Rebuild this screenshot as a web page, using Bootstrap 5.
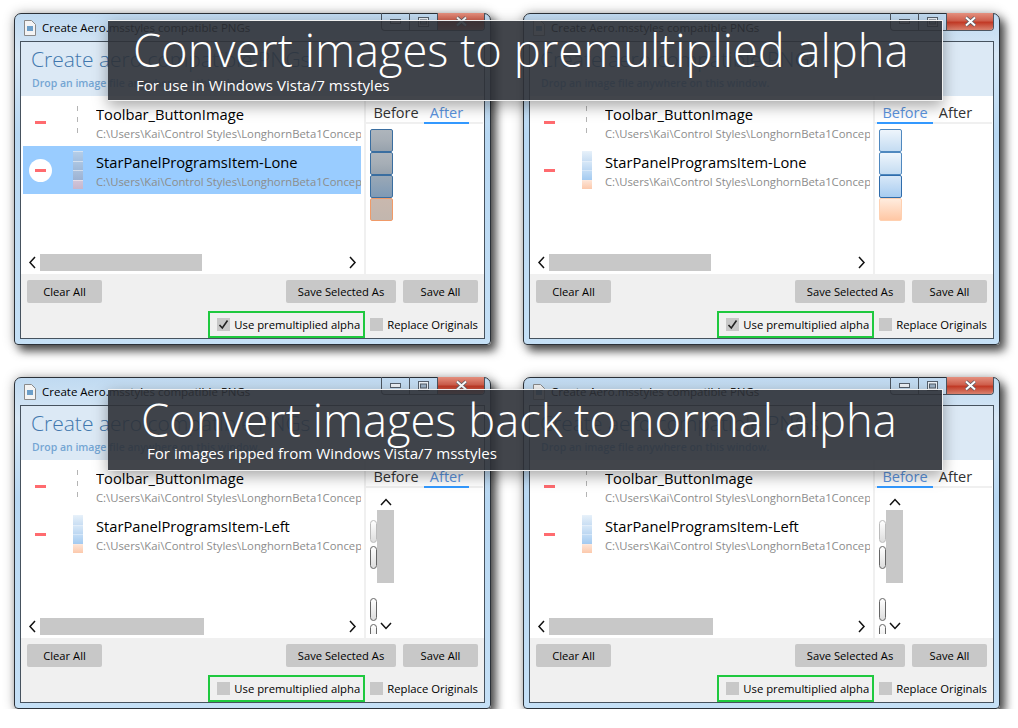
<!DOCTYPE html>
<html lang="en">
<head>
  <meta charset="UTF-8" />
  <meta name="viewport" content="width=device-width, initial-scale=1.0" />
  <title>Create Aero.msstyles compatible PNGs</title>
  <link href="https://cdn.jsdelivr.net/npm/bootstrap@5.3.0/dist/css/bootstrap.min.css" rel="stylesheet" />
  <style>
    body { background: #fff; font-family: "Open Sans", "Noto Sans", sans-serif; color: #000; overflow: hidden; }
    .shot-grid { padding: 13px 0 0 14px; gap: 32px; }
    .win-row { gap: 32px; width: 986px; }
    .banner {
      top: 7px; left: 94px; width: 835px; height: 81px; z-index: 5;
      background: rgba(45, 49, 55, .9);
      border: 1px solid #f0f0f0; border-left: 0;
      box-shadow: 0 5px 14px rgba(0, 0, 0, .35);
      color: #fff; padding-left: 25px;
    }
    .banner.tall { top: 12px; height: 82px; padding-left: 33px; }
    .banner-head { font-size: 45.3px; font-weight: 300; line-height: 52px; margin-top: 3px; }
    .banner.tall .banner-head { font-size: 45.3px; margin-top: 4px; }
    .banner-sub { font-size: 15.1px; line-height: 20px; margin: -1px 0 0 3px; }
    .banner.tall .banner-sub { margin-top: -3px; margin-left: 6px; }

    .aero-win {
      width: 477px; height: 332px;
      border: 1px solid #2b3138; border-radius: 7px 7px 4px 4px;
      background: linear-gradient(180deg, #c0daf1 0, #d7e7f5 40px, #b8d8f3 120px, #c5e0f6 100%);
      box-shadow: 5px 6px 10px rgba(0, 0, 0, .68), 0 0 12px rgba(0, 0, 0, .28);
      padding: 0 5px 5px 5px;
    }
    .win-title { height: 27px; font-size: 11.5px; padding-left: 3px; }
    .win-title span { margin-left: 5px; }
    .win-btns { top: -1px; right: 5px; height: 18px; border: 1px solid #4c5560; border-top: 0; border-radius: 0 0 4px 4px; }
    .win-btn { width: 28px; border-right: 1px solid #4c5560; }
    .win-btn.closer {
      width: 46px; border-right: 0; border-radius: 0 0 3px 0;
      background: linear-gradient(180deg, #e4907f 0, #cf5f4c 45%, #c23a26 55%, #d9826f 100%);
    }
    .client { height: 298px; border: 1px solid #46525e; background: #fff; }
    .head-pane { height: 54px; background: #dce9f5; padding: 4px 0 0 10px; }
    .head-title { font-size: 21px; font-weight: 300; line-height: 27px; color: #4177ad; }
    .head-sub { font-size: 10.5px; line-height: 16px; font-weight: 600; color: #74a5d3; margin: 2px 0 0 1px; }

    .mid-pane { height: 178px; }
    .list-pane { width: 343px; padding: 2px 3px 0 2px; }
    .file-row { height: 48px; padding-left: 6px; }
    .file-row.picked { background: #99ccff; }
    .minus-cell { width: 23px; height: 23px; border-radius: 50%; }
    .picked .minus-cell { background: #fff; }
    .minus-cell i { display: block; width: 11px; height: 3px; background: #ff6b6f; }
    .thumb-cell { width: 10px; margin: 0 13px 0 21px; }
    .thumb-cell b { display: block; height: 9.5px; border-top: 1px solid rgba(255, 255, 255, .55); }
    .dash-line { width: 1px; height: 32px; margin-left: 4px; background: repeating-linear-gradient(180deg, #b4b4b4 0 5px, #fff 5px 11px); }
    .file-info { min-width: 0; flex: 1; overflow: hidden; white-space: nowrap; padding-top: 2px; }
    .file-name { font-size: 14.7px; line-height: 19px; }
    .file-path { font-size: 11.3px; line-height: 15px; color: #8c8c8c; margin-top: 2px; }
    .hscroll { height: 17px; margin-top: 60px; padding: 0 3px 0 4px; }
    .hscroll-thumb { background: #c8c8c8; height: 17px; margin-left: 2px; }

    .side-pane { width: 120px; border-left: 2px solid #f0f0f0; }
    .tab-strip { border-bottom: 2px solid #f0f0f0; height: 28px; margin-right: 1px; padding-left: 2px; }
    .tab-item { font-size: 14.5px; line-height: 22px; padding: 6px 0 0; height: 28px; margin-bottom: -2px; text-align: center; color: #333; }
    .tab-item.first { width: 56px; }
    .tab-item.second { width: 45px; }
    .tab-item.on { color: #5b94e0; border-bottom: 2px solid #3399ff; }
    .tile-stack { padding: 5px 0 0 4px; }
    .tile { width: 23px; height: 23px; border-radius: 2px; border: 1px solid #3a6ea0; }
    .tile.dark { background: linear-gradient(180deg, #aeb5bc 0, #a6aeb6 50%, #97a2ad 100%); }
    .tile.dark.mid { background: linear-gradient(180deg, #9aa8b6, #7f9ab5); }
    .tile.dark.warm { background: linear-gradient(180deg, #c9b8ae, #c2b6ae); border-color: #f09a68; }
    .tile.lite { background: linear-gradient(180deg, #eef5fc 0, #c4dcf2 100%); border-color: #4f88bf; }
    .tile.lite.mid { background: linear-gradient(180deg, #d8e8f8, #a8ccf0); border-color: #2f6cab; }
    .tile.lite.warm { background: linear-gradient(180deg, #ffecde, #ffc7a4); border-color: #ffd0b0; }

    .vbar { height: 146px; overflow: hidden; }
    .pill-col { width: 7px; margin: 32px 0 0 4px; }
    .pill { width: 7px; height: 23px; border: 1px solid #666; border-radius: 4px; margin-bottom: 3px; background: linear-gradient(180deg, #fff, #ddd); flex-shrink: 0; }
    .pill.gap { margin-top: 26px; }
    .pill.faint { border-color: #bbb; }
    .vbar-track { width: 17px; }
    .vbar-thumb { height: 73px; background: #c8c8c8; flex-shrink: 0; }
    .chev-up { height: 22px; padding-top: 10px; flex-shrink: 0; }
    .chev-dn { margin-top: 39px; }

    .foot-pane { height: 64px; background: #f0f0f0; padding: 6px 6px 0 6px; }
    .act-btn {
      height: 23px; padding: 0; width: 75px; border: 0; border-radius: 2px;
      background: #c8c8c8; color: #000; font-size: 11.2px; line-height: 24px;
    }
    .act-btn.wide { width: 110px; margin-right: 7px; }
    .check-row { margin-top: 8px; font-size: 11.3px; line-height: 16px; }
    .green-box { width: 157px; height: 27px; border: 2px solid #1fc93f; padding-left: 7px; margin-right: 5px; }
    .tick-box { width: 13px; height: 13px; background: #c8c8c8; margin-right: 4px; flex-shrink: 0; }
  </style>
</head>
<body>
  <div class="shot-grid d-flex flex-column" id="shots"></div>

  <script>
    const chevron = (d, w, h) =>
      `<svg width="${w}" height="${h}" viewBox="0 0 ${w} ${h}" fill="none" stroke="#111" stroke-width="1.5"><path d="${d}"/></svg>`;

    const thumb = (kind) => {
      const sets = {
        bright: [["#e4eff9", "#c9def3"], ["#d6e7f7", "#bcd7f2"], ["#c2dcf5", "#a3caf0"], ["#fde3d4", "#fcc9ac"]],
        dim: [["#b4cde8", "#a4c0e0"], ["#acc5e2", "#9fb9d9"], ["#a9bfdc", "#9cb2d3"], ["#d0c4d8", "#c7b6cc"]],
      };
      return sets[kind].map((c) => `<b style="background:linear-gradient(${c[0]},${c[1]})"></b>`).join("");
    };

    const row = (name, picked, kind) => `
      <div class="file-row d-flex align-items-center ${picked ? "picked" : ""}">
        <div class="minus-cell d-flex align-items-center justify-content-center flex-shrink-0"><i></i></div>
        <div class="thumb-cell flex-shrink-0">${kind ? thumb(kind) : '<div class="dash-line"></div>'}</div>
        <div class="file-info">
          <div class="file-name">${name}</div>
          <div class="file-path">C:\\Users\\Kai\\Control Styles\\LonghornBeta1Concept</div>
        </div>
      </div>`;

    const tiles = (tone) => ["", "", "mid", "warm"].map((m) => `<div class="tile ${tone} ${m}"></div>`).join("");

    const vbar = `
      <div class="vbar d-flex">
        <div class="pill-col d-flex flex-column">
          <div class="pill faint"></div>
          <div class="pill"></div>
          <div class="pill gap"></div>
          <div class="pill"></div>
        </div>
        <div class="vbar-track d-flex flex-column align-items-center">
          <div class="chev-up d-flex">${chevron("M1 7 6 1.5 11 7", 12, 8)}</div>
          <div class="vbar-thumb w-100"></div>
          <div class="chev-dn d-flex">${chevron("M1 1 6 6.5 11 1", 12, 8)}</div>
        </div>
      </div>`;

    const win = (w) => `
      <div class="aero-win position-relative">
        <div class="win-title d-flex align-items-center">
          <svg width="14" height="16" viewBox="0 0 14 16"><path d="M1.5.5h7l4 4v11h-11z" fill="#f4f4f4" stroke="#8a8a8a"/><rect x="4" y="6" width="6" height="5" fill="#6d9fc9"/></svg>
          <span>Create Aero.msstyles compatible PNGs</span>
        </div>
        <div class="win-btns position-absolute d-flex">
          <div class="win-btn d-flex align-items-center justify-content-center"><svg width="11" height="5"><rect x=".5" y=".5" width="10" height="4" fill="#eef3f8" stroke="#55606c"/></svg></div>
          <div class="win-btn d-flex align-items-center justify-content-center"><svg width="11" height="10"><rect x=".5" y=".5" width="10" height="9" fill="#eef3f8" stroke="#55606c"/><rect x="2.5" y="3" width="6" height="4" fill="#9fb4c8" stroke="#55606c"/></svg></div>
          <div class="win-btn closer d-flex align-items-center justify-content-center"><svg width="13" height="11" viewBox="0 0 13 11"><path d="M2 1.5 11 9.5M11 1.5 2 9.5" stroke="#5a5f68" stroke-width="3.6"/><path d="M2 1.5 11 9.5M11 1.5 2 9.5" stroke="#fff" stroke-width="2"/></svg></div>
        </div>
        <div class="client d-flex flex-column">
          <div class="head-pane">
            <div class="head-title">Create aero compatible PNGs</div>
            <div class="head-sub">Drop an image file anywhere on this window.</div>
          </div>
          <div class="mid-pane d-flex">
            <div class="list-pane flex-shrink-0">
              ${row("Toolbar_ButtonImage", false, null)}
              ${row(w.item, w.picked, w.thumb)}
              <div class="hscroll d-flex align-items-center">
                <div class="d-flex">${chevron("M8 1 3 6.5 8 12", 11, 13)}</div>
                <div class="hscroll-thumb" style="width:${w.hThumb}px"></div>
                <div class="ms-auto d-flex">${chevron("M3 1 8 6.5 3 12", 11, 13)}</div>
              </div>
            </div>
            <div class="side-pane">
              <div class="tab-strip d-flex">
                <div class="tab-item first ${w.tab === "Before" ? "on" : ""}">Before</div>
                <div class="tab-item second ${w.tab === "After" ? "on" : ""}">After</div>
              </div>
              ${w.tiles ? `<div class="tile-stack">${tiles(w.tiles)}</div>` : vbar}
            </div>
          </div>
          <div class="foot-pane">
            <div class="d-flex">
              <button type="button" class="btn act-btn">Clear All</button>
              <button type="button" class="btn act-btn wide ms-auto">Save Selected As</button>
              <button type="button" class="btn act-btn">Save All</button>
            </div>
            <div class="check-row d-flex align-items-center justify-content-end">
              <div class="green-box d-flex align-items-center">
                <span class="tick-box d-flex align-items-center justify-content-center">${w.checked ? '<svg width="11" height="11" viewBox="0 0 11 11" fill="none" stroke="#222" stroke-width="1.6"><path d="M1.5 6 4.3 9 9.5 1.5"/></svg>' : ""}</span>
                <span>Use premultiplied alpha</span>
              </div>
              <span class="tick-box"></span>
              <span>Replace Originals</span>
            </div>
          </div>
        </div>
      </div>`;

    const shots = [
      {
        banner: { head: "Convert images to premultiplied alpha", sub: "For use in Windows Vista/7 msstyles", cls: "" },
        wins: [
          { item: "StarPanelProgramsItem-Lone", picked: true, thumb: "dim", tab: "After", tiles: "dark", checked: true, hThumb: 162 },
          { item: "StarPanelProgramsItem-Lone", picked: false, thumb: "bright", tab: "Before", tiles: "lite", checked: true, hThumb: 162 },
        ],
      },
      {
        banner: { head: "Convert images back to normal alpha", sub: "For images ripped from Windows Vista/7 msstyles", cls: "tall" },
        wins: [
          { item: "StarPanelProgramsItem-Left", picked: false, thumb: "bright", tab: "After", tiles: null, checked: false, hThumb: 164 },
          { item: "StarPanelProgramsItem-Left", picked: false, thumb: "bright", tab: "Before", tiles: null, checked: false, hThumb: 164 },
        ],
      },
    ];

    document.getElementById("shots").innerHTML = shots.map((s) => `
      <div class="win-row d-flex position-relative">
        ${s.wins.map(win).join("")}
        <div class="banner position-absolute ${s.banner.cls}">
          <div class="banner-head">${s.banner.head}</div>
          <div class="banner-sub">${s.banner.sub}</div>
        </div>
      </div>`).join("");
  </script>

  <script src="https://cdn.jsdelivr.net/npm/bootstrap@5.3.0/dist/js/bootstrap.bundle.min.js"></script>
</body>
</html>
